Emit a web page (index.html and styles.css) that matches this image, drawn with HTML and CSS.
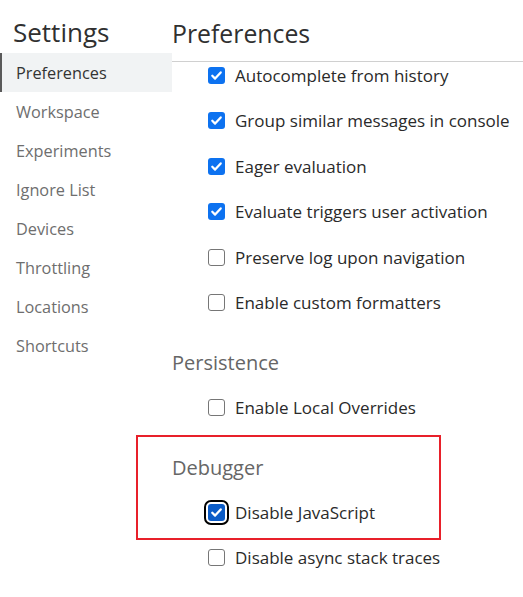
FILE: index.html
```html
<!DOCTYPE html>
<html>
<head>
<meta charset="utf-8">
<link rel="stylesheet" href="styles.css">
</head>
<body>
<div class="layout">
  <nav class="sidebar">
    <div class="sidebar-title">Settings</div>
    <ul class="nav-list">
      <li class="nav-item selected">Preferences</li>
      <li class="nav-item">Workspace</li>
      <li class="nav-item">Experiments</li>
      <li class="nav-item">Ignore List</li>
      <li class="nav-item">Devices</li>
      <li class="nav-item">Throttling</li>
      <li class="nav-item">Locations</li>
      <li class="nav-item">Shortcuts</li>
    </ul>
  </nav>
  <main class="main">
    <div class="main-title">Preferences</div>
    <div class="content">
      <section class="section">
        <label class="row"><span class="cb checked"><svg viewBox="0 0 16 16"><path d="M3.5 8.3l3 3 6-6.6" fill="none" stroke="#fff" stroke-width="2.4" stroke-linecap="round" stroke-linejoin="round"/></svg></span><span class="label">Autocomplete from history</span></label>
        <label class="row"><span class="cb checked"><svg viewBox="0 0 16 16"><path d="M3.5 8.3l3 3 6-6.6" fill="none" stroke="#fff" stroke-width="2.4" stroke-linecap="round" stroke-linejoin="round"/></svg></span><span class="label">Group similar messages in console</span></label>
        <label class="row"><span class="cb checked"><svg viewBox="0 0 16 16"><path d="M3.5 8.3l3 3 6-6.6" fill="none" stroke="#fff" stroke-width="2.4" stroke-linecap="round" stroke-linejoin="round"/></svg></span><span class="label">Eager evaluation</span></label>
        <label class="row"><span class="cb checked"><svg viewBox="0 0 16 16"><path d="M3.5 8.3l3 3 6-6.6" fill="none" stroke="#fff" stroke-width="2.4" stroke-linecap="round" stroke-linejoin="round"/></svg></span><span class="label">Evaluate triggers user activation</span></label>
        <label class="row"><span class="cb"></span><span class="label">Preserve log upon navigation</span></label>
        <label class="row"><span class="cb"></span><span class="label">Enable custom formatters</span></label>
      </section>
      <section class="section">
        <div class="section-title">Persistence</div>
        <label class="row"><span class="cb"></span><span class="label">Enable Local Overrides</span></label>
      </section>
      <section class="section highlighted">
        <div class="section-title">Debugger</div>
        <label class="row"><span class="cb checked focused"><svg viewBox="0 0 16 16"><path d="M3.5 8.3l3 3 6-6.6" fill="none" stroke="#fff" stroke-width="2.4" stroke-linecap="round" stroke-linejoin="round"/></svg></span><span class="label">Disable JavaScript</span></label>
      </section>
      <section class="section">
        <label class="row"><span class="cb"></span><span class="label">Disable async stack traces</span></label>
      </section>
    </div>
  </main>
</div>
</body>
</html>
```

FILE: styles.css
```css
* { box-sizing: border-box; }
html, body {
  margin: 0;
  padding: 0;
  background: #fff;
  height: 100%;
  overflow: hidden;
}
body {
  font-family: "Open Sans", "Noto Sans", sans-serif;
  color: #202124;
}
.layout {
  display: flex;
  height: 597px;
}
.sidebar {
  width: 172px;
  flex: none;
}
.sidebar-title {
  height: 53px;
  padding-left: 13px;
  font-size: 26px;
  line-height: 64px;
  color: #303030;
}
.nav-list {
  list-style: none;
  margin: 0;
  padding: 0;
}
.nav-item {
  height: 39px;
  line-height: 41px;
  padding-left: 16px;
  font-size: 16.3px;
  color: #6e6e6e;
}
.nav-item.selected {
  background: #f1f3f4;
  border-left: 2px solid #5a5a5a;
  padding-left: 14px;
  color: #333;
}
.main {
  flex: 1;
  min-width: 0;
}
.main-title {
  height: 62px;
  padding-left: 0;
  font-size: 24.8px;
  line-height: 66px;
  color: #303030;
  border-bottom: 1px solid #d0d0d0;
}
.content {
  display: flex;
  flex-direction: column;
}
.section {
  display: flex;
  flex-direction: column;
  gap: 19.6px;
  position: relative;
}
.section + .section { margin-top: 32px; }
.section-title {
  height: 30px;
  line-height: 30px;
  font-size: 20px;
  color: #666;
  padding-left: 0;
  margin-bottom: -2.6px;
}
.highlighted + .section { margin-top: 19px; }
.highlighted::after {
  content: "";
  position: absolute;
  left: -36px;
  top: -18px;
  width: 301px;
  height: 101px;
  border: 2px solid #e8202a;
}
.row {
  display: flex;
  align-items: center;
  height: 26px;
  padding-left: 36px;
  gap: 10px;
}
.cb {
  width: 17px;
  height: 17px;
  flex: none;
  border: 1.5px solid #767676;
  border-radius: 3px;
  background: #fff;
  display: flex;
  align-items: center;
  justify-content: center;
}
.cb svg { width: 15px; height: 15px; display: block; }
.cb.checked {
  border: none;
  background: #0d72f0;
}
.cb.focused {
  background: #0b5cc8;
  outline: 2px solid #000;
  outline-offset: 2px;
}
.label {
  font-size: 17px;
  color: #2a2a2a;
  white-space: nowrap;
}
```
